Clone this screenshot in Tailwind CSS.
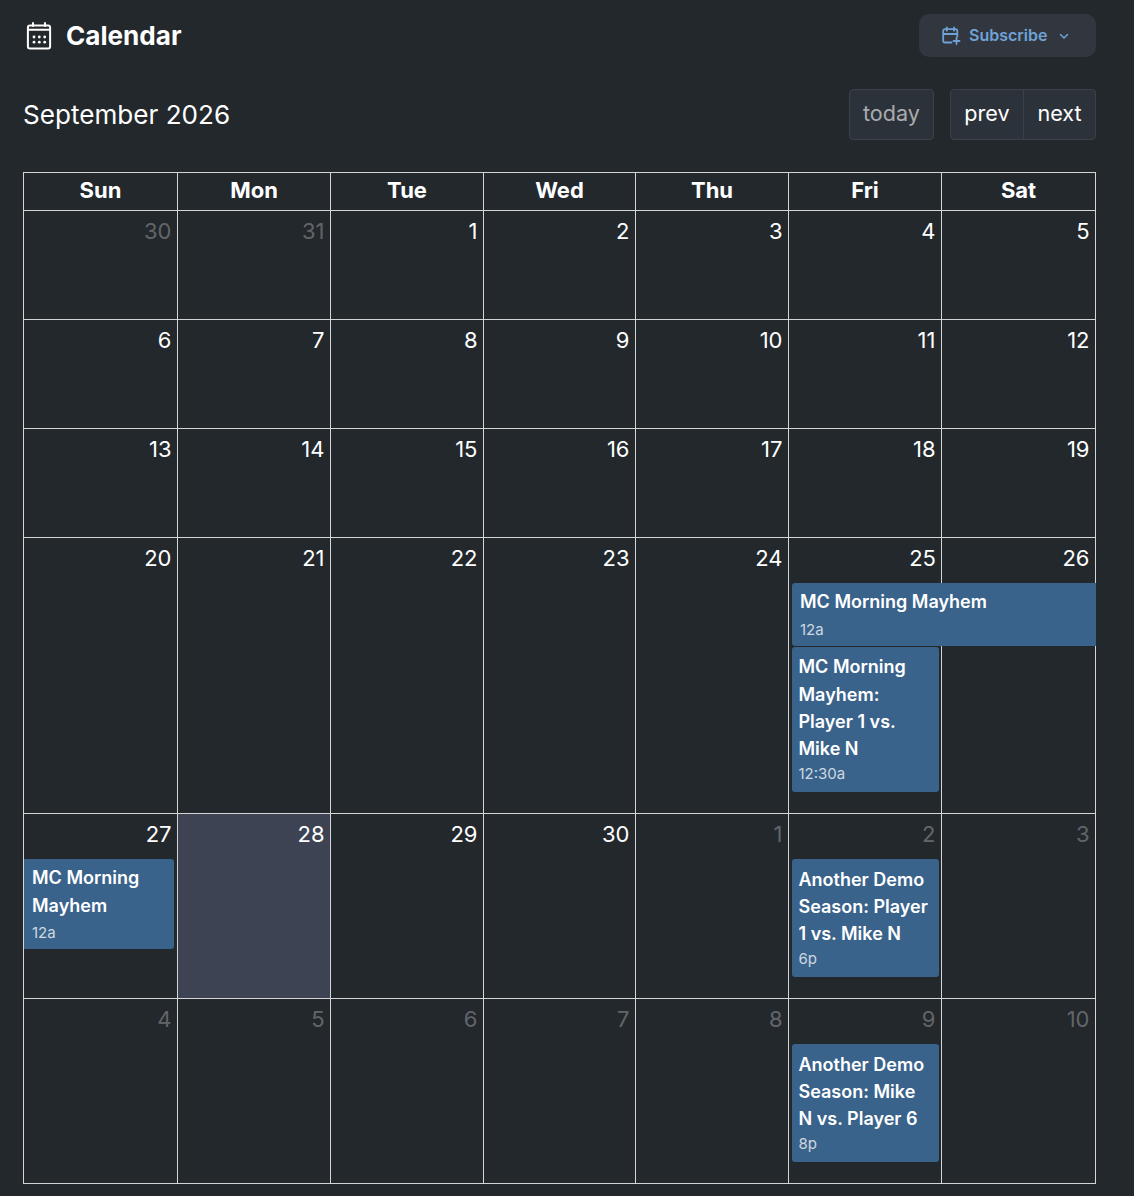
<!DOCTYPE html>
<html><head><meta charset="utf-8"><script src="https://cdn.jsdelivr.net/npm/@tailwindcss/browser@4"></script></head>
<body class="bg-[#23282d] font-['Inter',sans-serif] text-white overflow-hidden">
<div class="w-[1134px] h-[1196px] pl-[23px] pr-[38px]">
  <div class="flex justify-between items-start h-[89px] pt-[14px]">
    <div class="flex items-center gap-[13px] pl-[2px] h-[43px]">
      <svg class="w-[28px] h-[28px]" viewBox="0 0 28 28" fill="none" stroke="#fff" stroke-width="2" stroke-linecap="round" stroke-linejoin="round"><rect x="2.900" y="3.500" width="22.200" height="23" rx="2"/><path d="M3 7.800h22M8 1v3M20 1v3"/><g fill="#fff" stroke="none"><circle cx="9" cy="15" r="1.400"/><circle cx="14.300" cy="15" r="1.400"/><circle cx="19.700" cy="15" r="1.400"/><circle cx="9" cy="20.200" r="1.400"/><circle cx="14.300" cy="20.200" r="1.400"/><circle cx="19.700" cy="20.200" r="1.400"/></g></svg>
      <span class="text-[26.100px] font-bold leading-none pt-[1px]">Calendar</span>
    </div>
    <button class="w-[177px] h-[43px] rounded-[10px] bg-[#31363f] flex items-center pl-[22px] text-[#6fa3d6] text-[16px] font-semibold">
      <svg class="w-[20px] h-[20px] mr-[8px]" viewBox="0 0 20 20" fill="none" stroke="#6fa3d6" stroke-width="1.800" stroke-linecap="round" stroke-linejoin="round"><path d="M10.500 16.500H4a1.800 1.800 0 0 1-1.800-1.800V5A1.800 1.800 0 0 1 4 3.200h10.500A1.800 1.800 0 0 1 16.300 5v5.500M5.800 1.500v3.200M13 1.500v3.200M2.200 8h14M15.500 12v6M12.500 15h6"/></svg>
      <span class="pb-[2px]">Subscribe</span>
      <svg class="w-[12px] h-[12px] ml-[11px]" viewBox="0 0 12 12" fill="none" stroke="#6fa3d6" stroke-width="1.500" stroke-linecap="round" stroke-linejoin="round"><path d="M2.500 4.500 6 8l3.500-3.500"/></svg>
    </button>
  </div>
  <div class="flex justify-between items-start h-[83px]">
    <h2 class="text-[26.100px] leading-[51px] font-normal">September 2026</h2>
    <div class="flex gap-[16px] text-[21.600px] leading-none">
      <button class="h-[51px] w-[85px] pb-[1px] rounded-[4px] bg-[#2c323a] border border-[#3a414a] text-white/60">today</button>
      <div class="flex h-[51px] rounded-[4px] bg-[#2c323a] border border-[#3a414a]">
        <button class="w-[73px] pb-[1px] border-r border-[#3a414a]">prev</button>
        <button class="w-[71px] pb-[1px]">next</button>
      </div>
    </div>
  </div>
  <div class="w-[1073px] border-t border-l border-[#d5d5d5] text-[22px]">
    <div class="grid grid-cols-[154px_153px_153px_152px_153px_153px_154px] h-[38px] font-bold text-center leading-[35px]">
      <div class="border-r border-b border-[#d5d5d5]">Sun</div><div class="border-r border-b border-[#d5d5d5]">Mon</div><div class="border-r border-b border-[#d5d5d5]">Tue</div><div class="border-r border-b border-[#d5d5d5]">Wed</div><div class="border-r border-b border-[#d5d5d5]">Thu</div><div class="border-r border-b border-[#d5d5d5]">Fri</div><div class="border-r border-b border-[#d5d5d5]">Sat</div>
    </div>
    <div class="grid grid-cols-[154px_153px_153px_152px_153px_153px_154px] h-[109px] text-right leading-[27px]">
      <div class="border-r border-b border-[#d5d5d5] pr-[5.500px] pt-[7px] text-white/30">30</div><div class="border-r border-b border-[#d5d5d5] pr-[5.500px] pt-[7px] text-white/30">31</div><div class="border-r border-b border-[#d5d5d5] pr-[5.500px] pt-[7px]">1</div><div class="border-r border-b border-[#d5d5d5] pr-[5.500px] pt-[7px]">2</div><div class="border-r border-b border-[#d5d5d5] pr-[5.500px] pt-[7px]">3</div><div class="border-r border-b border-[#d5d5d5] pr-[5.500px] pt-[7px]">4</div><div class="border-r border-b border-[#d5d5d5] pr-[5.500px] pt-[7px]">5</div>
    </div>
    <div class="grid grid-cols-[154px_153px_153px_152px_153px_153px_154px] h-[109px] text-right leading-[27px]">
      <div class="border-r border-b border-[#d5d5d5] pr-[5.500px] pt-[7px]">6</div><div class="border-r border-b border-[#d5d5d5] pr-[5.500px] pt-[7px]">7</div><div class="border-r border-b border-[#d5d5d5] pr-[5.500px] pt-[7px]">8</div><div class="border-r border-b border-[#d5d5d5] pr-[5.500px] pt-[7px]">9</div><div class="border-r border-b border-[#d5d5d5] pr-[5.500px] pt-[7px]">10</div><div class="border-r border-b border-[#d5d5d5] pr-[5.500px] pt-[7px]">11</div><div class="border-r border-b border-[#d5d5d5] pr-[5.500px] pt-[7px]">12</div>
    </div>
    <div class="grid grid-cols-[154px_153px_153px_152px_153px_153px_154px] h-[109px] text-right leading-[27px]">
      <div class="border-r border-b border-[#d5d5d5] pr-[5.500px] pt-[7px]">13</div><div class="border-r border-b border-[#d5d5d5] pr-[5.500px] pt-[7px]">14</div><div class="border-r border-b border-[#d5d5d5] pr-[5.500px] pt-[7px]">15</div><div class="border-r border-b border-[#d5d5d5] pr-[5.500px] pt-[7px]">16</div><div class="border-r border-b border-[#d5d5d5] pr-[5.500px] pt-[7px]">17</div><div class="border-r border-b border-[#d5d5d5] pr-[5.500px] pt-[7px]">18</div><div class="border-r border-b border-[#d5d5d5] pr-[5.500px] pt-[7px]">19</div>
    </div>
    <div class="grid grid-cols-[154px_153px_153px_152px_153px_153px_154px] h-[276px] text-right leading-[27px]">
      <div class="border-r border-b border-[#d5d5d5] pr-[5.500px] pt-[7px]">20</div><div class="border-r border-b border-[#d5d5d5] pr-[5.500px] pt-[7px]">21</div><div class="border-r border-b border-[#d5d5d5] pr-[5.500px] pt-[7px]">22</div><div class="border-r border-b border-[#d5d5d5] pr-[5.500px] pt-[7px]">23</div><div class="border-r border-b border-[#d5d5d5] pr-[5.500px] pt-[7px]">24</div>
      <div class="border-r border-b border-[#d5d5d5] pt-[7px] text-left">
        <div class="text-right pr-[5px]">25</div>
        <div class="ml-[3px] mt-[11px] w-[304px] h-[63px] rounded-l-[3px] bg-[#3a638c] relative z-10 pl-[8px] pt-[5px]">
          <div class="text-[18px] leading-[27px] font-semibold">MC Morning Mayhem</div>
          <div class="text-[15px] leading-[30px] text-white/75">12a</div>
        </div>
        <div class="ml-[3px] mt-[1px] w-[147px] h-[145px] rounded-[3px] bg-[#3a638c] pl-[6.500px] pr-[7px] pt-[6.400px]">
          <div class="text-[18px] leading-[27.300px] font-semibold">MC Morning Mayhem: Player 1 vs. Mike N</div>
          <div class="text-[15px] leading-[22px] pt-[0.500px] text-white/75">12:30a</div>
        </div>
      </div>
      <div class="border-r border-b border-[#d5d5d5] pr-[5.500px] pt-[7px]">26</div>
    </div>
    <div class="grid grid-cols-[154px_153px_153px_152px_153px_153px_154px] h-[185px] text-right leading-[27px]">
      <div class="border-r border-b border-[#d5d5d5] pt-[7px] text-left">
        <div class="text-right pr-[5.500px]">27</div>
        <div class="mt-[11px] w-[150px] h-[90px] rounded-r-[3px] bg-[#3a638c] pl-[8px] pt-[5px]">
          <div class="text-[18px] leading-[27.600px] font-semibold">MC Morning Mayhem</div>
          <div class="text-[15px] leading-[27px] text-white/75">12a</div>
        </div>
      </div>
      <div class="border-r border-b border-[#d5d5d5] pr-[5.500px] pt-[7px] bg-[#3e4354]">28</div><div class="border-r border-b border-[#d5d5d5] pr-[5.500px] pt-[7px]">29</div><div class="border-r border-b border-[#d5d5d5] pr-[5.500px] pt-[7px]">30</div><div class="border-r border-b border-[#d5d5d5] pr-[5.500px] pt-[7px] text-white/30">1</div>
      <div class="border-r border-b border-[#d5d5d5] pt-[7px] text-left">
        <div class="text-right pr-[5.500px] text-white/30">2</div>
        <div class="ml-[3px] mt-[11px] w-[147px] h-[118px] rounded-[3px] bg-[#3a638c] pl-[6.500px] pr-[7px] pt-[6.500px]">
          <div class="text-[18px] leading-[27.300px] font-semibold">Another Demo Season: Player 1 vs. Mike N</div>
          <div class="text-[15px] leading-[23px] text-white/75">6p</div>
        </div>
      </div>
      <div class="border-r border-b border-[#d5d5d5] pr-[5.500px] pt-[7px] text-white/30">3</div>
    </div>
    <div class="grid grid-cols-[154px_153px_153px_152px_153px_153px_154px] h-[185px] text-right leading-[27px]">
      <div class="border-r border-b border-[#d5d5d5] pr-[5.500px] pt-[7px] text-white/30">4</div><div class="border-r border-b border-[#d5d5d5] pr-[5.500px] pt-[7px] text-white/30">5</div><div class="border-r border-b border-[#d5d5d5] pr-[5.500px] pt-[7px] text-white/30">6</div><div class="border-r border-b border-[#d5d5d5] pr-[5.500px] pt-[7px] text-white/30">7</div><div class="border-r border-b border-[#d5d5d5] pr-[5.500px] pt-[7px] text-white/30">8</div>
      <div class="border-r border-b border-[#d5d5d5] pt-[7px] text-left">
        <div class="text-right pr-[5.500px] text-white/30">9</div>
        <div class="ml-[3px] mt-[11px] w-[147px] h-[118px] rounded-[3px] bg-[#3a638c] pl-[6.500px] pr-[7px] pt-[6.500px]">
          <div class="text-[18px] leading-[27.300px] font-semibold">Another Demo Season: Mike N vs. Player 6</div>
          <div class="text-[15px] leading-[23px] text-white/75">8p</div>
        </div>
      </div>
      <div class="border-r border-b border-[#d5d5d5] pr-[5.500px] pt-[7px] text-white/30">10</div>
    </div>
  </div>
</div>
</body></html>
